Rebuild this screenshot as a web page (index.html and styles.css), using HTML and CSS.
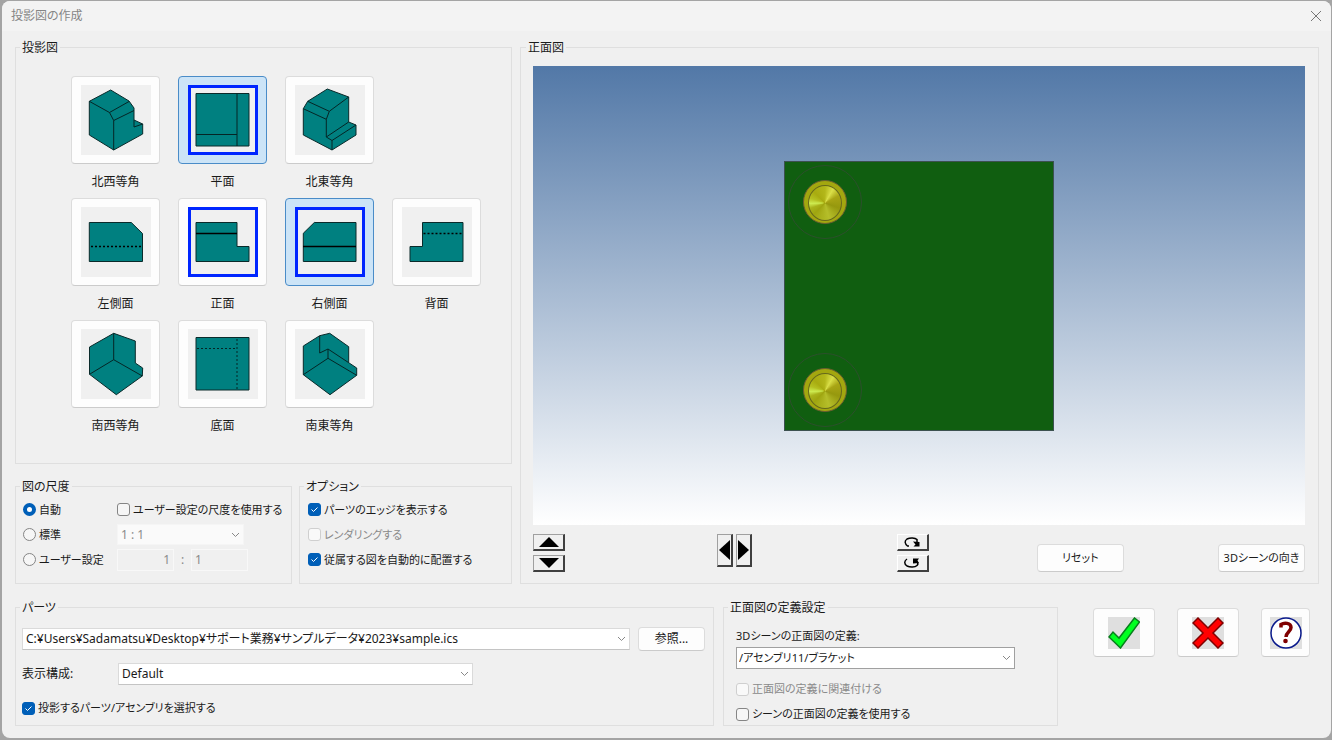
FILE: index.html
```html
<!DOCTYPE html>
<html lang="ja">
<head>
<meta charset="utf-8">
<title>投影図の作成</title>
<link rel="stylesheet" href="styles.css">
</head>
<body>
<main class="window">
  <header class="titlebar">
    <h1 class="title">投影図の作成</h1>
    <button class="close" type="button" aria-label="閉じる"><svg width="12" height="12" viewBox="0 0 12 12"><path d="M1 1 11 11M11 1 1 11" stroke="#777" fill="none"/></svg></button>
  </header>

  <form class="content">
    <div class="upper">
      <div class="left">
        <fieldset class="group">
          <legend>投影図</legend>
          <div class="views">
            <div class="view"><button class="tile" type="button" aria-labelledby="v1"><svg class="shape" viewBox="0 0 70 70"><path class="solid" d="M29.7 5 48 16 53 23V35L61.7 39V49L32.7 65 8.3 50V16.3Z"/><path class="edge" d="M8.3 16.3 28.5 27.5 48 16.5M28.5 27.5 32.7 35.5 53 25.5M32.7 35.5V65M53 35V42L61.7 39"/></svg></button><span class="caption" id="v1">北西等角</span></div>
            <div class="view"><button class="tile selected" type="button" aria-pressed="true" aria-labelledby="v2"><svg class="shape framed" viewBox="0 0 70 70"><path class="solid" d="M8 8.5H61V61H8Z"/><path class="edge" d="M49 8.5V61M8 49.5H49"/></svg></button><span class="caption" id="v2">平面</span></div>
            <div class="view"><button class="tile" type="button" aria-labelledby="v3"><svg class="shape" viewBox="0 0 70 70"><path class="solid" d="M32.3 4 53.7 12V37L61 40V50L37 65 8.3 50V23.7L12.7 16.3Z"/><path class="edge" d="M12.7 16.3 34.3 26.3 53.7 12M8.3 23.7 31.3 34.3M34.3 26.3 31.3 34.3V52L37 55.5 61 40M37 55.5V65M31.3 52 53.7 37"/></svg></button><span class="caption" id="v3">北東等角</span></div>
            <div class="view row-start"><button class="tile" type="button" aria-labelledby="v4"><svg class="shape" viewBox="0 0 70 70"><path class="solid" d="M8.3 15.5H50.3L61.5 26.5V54.5H8.3Z"/><path class="edge bold dotted" d="M10 39.5H61"/></svg></button><span class="caption" id="v4">左側面</span></div>
            <div class="view"><button class="tile" type="button" aria-labelledby="v5"><svg class="shape framed" viewBox="0 0 70 70"><path class="solid" d="M8 15.5H49V39.5H61V54.5H8Z"/><path class="edge bold" d="M8 26.5H49"/></svg></button><span class="caption" id="v5">正面</span></div>
            <div class="view"><button class="tile selected" type="button" aria-pressed="true" aria-labelledby="v6"><svg class="shape framed" viewBox="0 0 70 70"><path class="solid" d="M19.3 15.5H61V54.5H8.3V26.3Z"/><path class="edge bold" d="M8 39.5H61"/></svg></button><span class="caption" id="v6">右側面</span></div>
            <div class="view"><button class="tile" type="button" aria-labelledby="v7"><svg class="shape" viewBox="0 0 70 70"><path class="solid" d="M20.5 15.5H61V54.5H8V39.5H20.5Z"/><path class="edge bold dotted" d="M21.5 26.5H61"/></svg></button><span class="caption" id="v7">背面</span></div>
            <div class="view row-start"><button class="tile" type="button" aria-labelledby="v8"><svg class="shape" viewBox="0 0 70 70"><path class="solid" d="M32.7 4.3 54.3 12V34L61.7 39 61.3 47 35.3 65.7 8.5 45.3V18Z"/><path class="edge" d="M32.7 4.3V30.7L8.5 45.3M32.7 30.7 61.3 47"/></svg></button><span class="caption" id="v8">南西等角</span></div>
            <div class="view"><button class="tile" type="button" aria-labelledby="v9"><svg class="shape" viewBox="0 0 70 70"><path class="solid" d="M8 8.5H61V61H8Z"/><path class="edge dotted" d="M49 10V61M9 19.5H49"/></svg></button><span class="caption" id="v9">底面</span></div>
            <div class="view"><button class="tile" type="button" aria-labelledby="v10"><svg class="shape" viewBox="0 0 70 70"><path class="solid" d="M8.3 17 24.7 6.7 34.7 4.3 53.7 17.7V33.7L61.7 39V46.3L35 65.7 8.3 45.7Z"/><path class="edge" d="M24.7 6.7V24L33 20 53.7 33.7M33 20V29.3L8.3 45.7M33 29.3 61.7 46.3"/></svg></button><span class="caption" id="v10">南東等角</span></div>
          </div>
        </fieldset>

        <div class="settings">
          <fieldset class="group scale-group">
            <legend>図の尺度</legend>
            <div class="scale">
              <label class="check"><input type="radio" name="scale" checked>自動</label>
              <label class="check"><input type="checkbox">ユーザー設定の尺度を使用する</label>
              <label class="check"><input type="radio" name="scale">標準</label>
              <select class="combo scale-combo" aria-label="標準尺度" disabled><option>1 : 1</option></select>
              <label class="check"><input type="radio" name="scale">ユーザー設定</label>
              <div class="ratio"><input class="num right" type="text" value="1" aria-label="尺度 左" disabled><span>:</span><input class="num" type="text" value="1" aria-label="尺度 右" disabled></div>
            </div>
          </fieldset>
          <fieldset class="group option-group">
            <legend>オプション</legend>
            <div class="options">
              <label class="check"><input type="checkbox" checked>パーツのエッジを表示する</label>
              <label class="check off"><input type="checkbox" disabled>レンダリングする</label>
              <label class="check"><input type="checkbox" checked>従属する図を自動的に配置する</label>
            </div>
          </fieldset>
        </div>
      </div>

      <fieldset class="group preview">
        <legend>正面図</legend>
        <div class="canvas">
          <div class="plate">
            <div class="hole top"><div class="stud"></div></div>
            <div class="hole bottom"><div class="stud"></div></div>
          </div>
        </div>
        <div class="toolbar">
          <div class="stack">
            <button class="classic" type="button" aria-label="上"><svg width="20" height="10" viewBox="0 0 20 10"><path d="M10 0 20 10H0Z"/></svg></button>
            <button class="classic" type="button" aria-label="下"><svg width="20" height="10" viewBox="0 0 20 10"><path d="M0 0H20L10 10Z"/></svg></button>
          </div>
          <div class="pair">
            <button class="classic tall" type="button" aria-label="左"><svg width="11" height="20" viewBox="0 0 11 20"><path d="M11 0V20L0 10Z"/></svg></button>
            <button class="classic tall" type="button" aria-label="右"><svg width="11" height="20" viewBox="0 0 11 20"><path d="M0 0 11 10 0 20Z"/></svg></button>
          </div>
          <div class="stack">
            <button class="classic light" type="button" aria-label="右回転"><svg width="16" height="10" viewBox="0 0 16 10"><path d="M5 9H3.500C1 7 0 4 3 2 6 .5 11 .5 13 2.500V5" fill="none" stroke="#000" stroke-width="1.500"/><path d="M9 4.500 15.500 5V9.500H9.500L11.500 7.500Z"/></svg></button>
            <button class="classic light" type="button" aria-label="左回転"><svg width="16" height="10" viewBox="0 0 16 10"><path d="M3 1C0 3 0 6 3 8 6 9.500 11 9.500 13 7.500 14 6.500 14 5 13 4" fill="none" stroke="#000" stroke-width="1.500"/><path d="M9 .5H15L13.500 2.500 15 5 9 5.500Z"/></svg></button>
          </div>
          <button class="push" type="button">リセット</button>
          <button class="push" type="button">3Dシーンの向き</button>
        </div>
      </fieldset>
    </div>

    <div class="lower">
      <fieldset class="group parts-group">
        <legend>パーツ</legend>
        <div class="parts">
          <div class="file-row">
            <select class="combo" aria-label="パーツ"><option>C:¥Users¥Sadamatsu¥Desktop¥サポート業務¥サンプルデータ¥2023¥sample.ics</option></select>
            <button class="push browse" type="button">参照...</button>
          </div>
          <div class="config-row">
            <label for="config">表示構成:</label>
            <select class="combo" id="config"><option>Default</option></select>
          </div>
          <label class="check"><input type="checkbox" checked>投影するパーツ/アセンブリを選択する</label>
        </div>
      </fieldset>

      <fieldset class="group front-group">
        <legend>正面図の定義設定</legend>
        <div class="front">
          <label for="front">3Dシーンの正面図の定義:</label>
          <select class="combo strong" id="front"><option>/アセンブリ11/ブラケット</option></select>
          <label class="check off"><input type="checkbox" disabled>正面図の定義に関連付ける</label>
          <label class="check"><input type="checkbox">シーンの正面図の定義を使用する</label>
        </div>
      </fieldset>

      <div class="actions">
        <button class="action" type="submit" aria-label="OK"><svg width="32" height="32" viewBox="0 0 32 32"><rect width="32" height="32" fill="#dfdfdf"/><path d="M1 20 5 15 11 21 26.500 1 31.500 5 12.500 31Z" fill="#00ff21" stroke="#087f1c" stroke-width="1.500"/></svg></button>
        <button class="action" type="button" aria-label="キャンセル"><svg width="32" height="32" viewBox="0 0 32 32"><rect width="32" height="32" fill="#dfdfdf"/><path d="M6 1 16 11 26 1 31 6 21 16 31 26 26 31 16 21 6 31 1 26 11 16 1 6Z" fill="#f00" stroke="#7f0000" stroke-width="1.500"/></svg></button>
        <button class="action narrow" type="button" aria-label="ヘルプ"><svg width="32" height="32" viewBox="0 0 32 32"><rect width="32" height="32" fill="#dfdfdf"/><circle cx="16" cy="16" r="15" fill="#fff" stroke="#0a1a8c" stroke-width="1.500"/><path d="M11 10.500V7.500C14 5.500 21 5.500 21 10.500 21 14.500 16 15 16 20" fill="none" stroke="#7f0000" stroke-width="3.500"/><circle cx="15.500" cy="24" r="2.300" fill="#7f0000"/></svg></button>
      </div>
    </div>
  </form>
</main>
</body>
</html>
```
FILE: styles.css
```css
* { box-sizing: border-box; }

body {
  margin: 0;
  padding: 1px 1px 2px 2px;
  min-height: 100vh;
  display: flex;
  background: #a4a4a4;
  color: #1a1a1a;
  font: 12px/16px "Noto Sans", "Noto Sans CJK JP", sans-serif;
  font-feature-settings: "palt";
}

button, input, select { font: inherit; font-feature-settings: inherit; color: inherit; margin: 0; }
svg { display: block; }

.window {
  flex: 1;
  min-width: 0;
  display: flex;
  flex-direction: column;
  border-radius: 8px;
  background: #f0f0f0;
  overflow: hidden;
}

.titlebar {
  height: 30px;
  padding: 0 9px;
  display: flex;
  align-items: center;
  justify-content: space-between;
  background: #f3f3f3;
}
.title { margin: 0; font-size: 12px; font-weight: 400; color: #858585; }
.close { padding: 0; border: 0; background: none; }

.content {
  flex: 1;
  padding: 7px 12px 12px 13px;
  display: flex;
  flex-direction: column;
  gap: 14px;
}

.upper { display: flex; gap: 8px; }
.left { flex: 0 0 497px; display: flex; flex-direction: column; gap: 13px; }

.group {
  margin: 0;
  min-width: 0;
  padding: 0 4px;
  border: 1px solid #dfdfdf;
}
.group legend { padding: 2px 2px 0; }

.views {
  padding: 20px 24px 28px 51px;
  display: grid;
  grid-template-columns: repeat(4, 89px);
  gap: 7px 18px;
}
.view { display: flex; flex-direction: column; gap: 9px; align-items: center; }
.row-start { grid-column: 1; }
.caption { line-height: 18px; }
.tile {
  width: 89px;
  height: 88px;
  padding: 0;
  display: grid;
  place-items: center;
  border: 1px solid #dcdcdc;
  border-bottom-color: #cbcbcb;
  border-radius: 4px;
  background: #fdfdfd;
}
.tile.selected { border-color: #4a8cc8; background: #cce4f7; }
.shape { width: 70px; height: 70px; background: #f0f0f0; }
.shape.framed { box-shadow: inset 0 0 0 3px #0026ff; }
.solid { fill: #008080; stroke: #0a2a2a; stroke-width: 1; }
.edge { fill: none; stroke: #052525; stroke-width: 1; }
.edge.bold { stroke: #000; stroke-width: 1.500; }
.dotted { stroke-dasharray: 2 2; }

.settings { display: flex; gap: 7px; }
.scale-group { flex: 0 0 277px; }
.option-group { flex: 1; }
.scale {
  padding: 2px 0 11px 3px;
  display: grid;
  grid-template-columns: 94px 1fr;
  grid-auto-rows: 25px;
  align-items: center;
}
.options { padding: 2px 0 11px 4px; display: grid; grid-auto-rows: 25px; align-items: center; }

.check { display: flex; align-items: center; gap: 3px; font-size: 11px; white-space: nowrap; }
.check.off { color: #8a8a8a; }
.check input {
  appearance: none;
  flex: none;
  width: 13px;
  height: 13px;
  border: 1px solid #858585;
  border-radius: 3px;
  background: #f6f6f6;
}
.check input[type="radio"] { border-radius: 50%; }
.check input[type="radio"]:checked { border: 4px solid #005fb8; background: #fff; }
.check input[type="checkbox"]:checked {
  border-color: #005fb8;
  background: #005fb8 url("data:image/svg+xml,%3Csvg xmlns='http://www.w3.org/2000/svg' viewBox='0 0 11 11'%3E%3Cpath d='M2.500 5.500 4.500 7.500 8.500 3.500' fill='none' stroke='white'/%3E%3C/svg%3E");
}
.check input:disabled { border-color: #cfcfcf; background: #f9f9f9; }

.combo {
  appearance: none;
  width: 100%;
  min-width: 0;
  height: 22px;
  padding: 0 20px 0 3px;
  border: 1px solid #dadada;
  border-bottom-color: #c4c4c4;
  border-radius: 0;
  background: #fff url("data:image/svg+xml,%3Csvg xmlns='http://www.w3.org/2000/svg' width='9' height='6'%3E%3Cpath d='M1 1 4.500 4.500 8 1' fill='none' stroke='%23888'/%3E%3C/svg%3E") no-repeat right 3px center;
}
.combo.strong { border-color: #a0a0a0; padding-left: 2px; }
.combo:disabled { opacity: 1; color: #8a8a8a; border-color: #f5f5f5; background-color: #fafafa; }
.scale-combo { width: 127px; height: 21px; }

.ratio { display: flex; align-items: center; color: #8a8a8a; }
.ratio span { width: 17px; text-align: center; }
.num {
  width: 57px;
  height: 22px;
  padding: 0 3px;
  border: 1px solid #f8f8f8;
  background: #f0f0f0;
  color: #8a8a8a;
}
.num.right { text-align: right; }

.preview { flex: 1; display: flex; flex-direction: column; padding: 0 13px 0 5px; }
.canvas {
  flex: 1;
  min-height: 300px;
  margin: 10px 0 0 7px;
  display: grid;
  place-items: center;
  background: linear-gradient(#5278a7, #fff);
}
.plate {
  position: relative;
  width: 270px;
  height: 270px;
  border: 1px solid #3c5150;
  background: #105e10;
}
.hole {
  position: absolute;
  left: 3px;
  width: 74px;
  height: 74px;
  display: grid;
  place-items: center;
  border: 1px solid #2c4f2c;
  border-radius: 50%;
}
.hole.top { top: 3px; }
.hole.bottom { bottom: 3px; }
.stud {
  width: 44px;
  height: 44px;
  padding: 4px;
  border: 1px solid #6b5f30;
  border-radius: 50%;
  background: #a3a70f;
}
.stud::before {
  content: "";
  display: block;
  height: 100%;
  border: 1px solid #66691c;
  border-radius: 50%;
  background: conic-gradient(#b3b71a, #dadf48 30deg, #a9a515 62deg, #96980e 110deg, #b5be2a 165deg, #9fa510 225deg, #a9b31b 250deg, #cdeb50 268deg, #b5c020 288deg, #a8ab10 315deg, #b3b71a);
}

.toolbar {
  padding: 9px 0 11px 7px;
  display: grid;
  grid-template-columns: 184fr 179fr 140fr 181fr auto;
  align-items: end;
}
.stack { display: flex; flex-direction: column; gap: 4px; align-items: start; }
.pair { display: flex; gap: 3px; align-self: start; }
.classic {
  width: 32px;
  height: 17px;
  padding: 0;
  display: grid;
  place-items: center;
  border: 1px solid #a0a0a0;
  border-right: 2px solid #404040;
  border-bottom: 2px solid #404040;
  background: #f0f0f0;
}
.classic.tall { width: 16px; height: 33px; }
.classic.light { border-top-color: #fff; border-left-color: #fff; }

.push {
  width: 87px;
  height: 28px;
  padding: 0;
  border: 1px solid #dcdcdc;
  border-bottom-color: #cbcbcb;
  border-radius: 4px;
  background: #fdfdfd;
  font-size: 11px;
  white-space: nowrap;
}
.browse { flex: none; width: 67px; height: 24px; font-size: 12px; }

.lower { display: flex; gap: 9px; align-items: start; }
.parts-group { flex: 1; }
.parts { padding: 11px 4px 6px 2px; display: flex; flex-direction: column; gap: 12px; }
.file-row { display: flex; align-items: center; gap: 8px; }
.config-row { display: flex; align-items: center; }
.config-row label { flex: 0 0 96px; }
.config-row .combo { max-width: 355px; }
.parts .check { height: 22px; }

.front-group { flex: 0 0 335px; font-size: 11px; }
.front-group legend { font-size: 12px; }
.front { padding: 12px 0 0 8px; display: flex; flex-direction: column; gap: 3px; }
.front .combo { width: 279px; margin-bottom: 6px; }
.front .check { height: 22px; }

.actions { flex: 0 0 252px; padding: 10px 0 0 26px; display: flex; gap: 22px; }
.action {
  width: 62px;
  height: 49px;
  padding: 0;
  display: grid;
  place-items: center;
  border: 1px solid #dcdcdc;
  border-bottom-color: #cbcbcb;
  border-radius: 4px;
  background: #fdfdfd;
}
.action.narrow { width: 49px; }
```
